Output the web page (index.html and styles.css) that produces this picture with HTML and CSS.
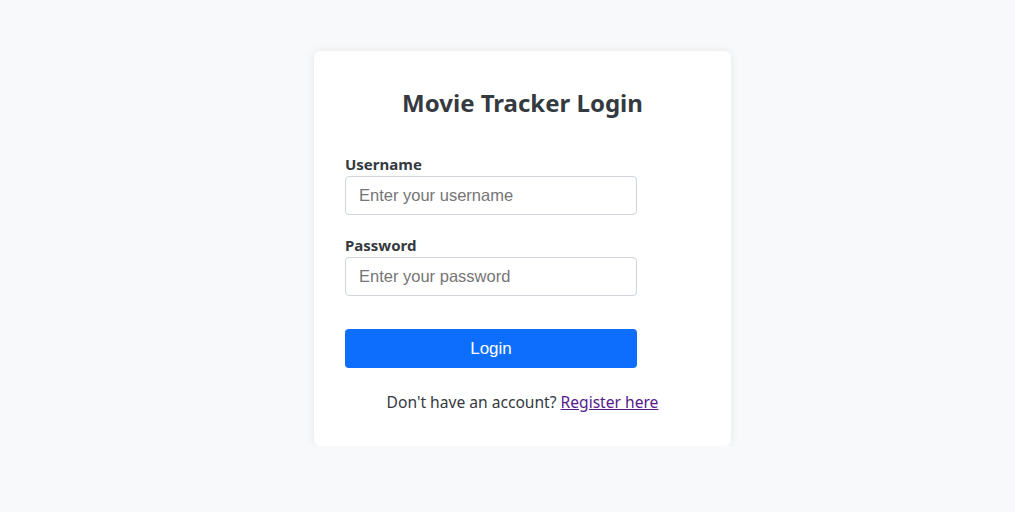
FILE: index.html
```html
<!DOCTYPE html>
<html lang="en">
<head>
<meta charset="utf-8">
<title>Movie Tracker Login</title>
<link rel="stylesheet" href="styles.css">
</head>
<body>
<div class="page">
  <div class="card">
    <h2 class="title">Movie Tracker Login</h2>
    <form class="form">
      <div class="field">
        <label class="label" for="username">Username</label>
        <input class="input" id="username" type="text" placeholder="Enter your username">
      </div>
      <div class="field">
        <label class="label" for="password">Password</label>
        <input class="input" id="password" type="password" placeholder="Enter your password">
      </div>
      <button class="btn" type="button">Login</button>
    </form>
    <p class="footer">Don't have an account? <a class="link" href="#">Register here</a></p>
  </div>
</div>
</body>
</html>
```

FILE: styles.css
```css
html, body {
  margin: 0;
  padding: 0;
}
body {
  background: #f8f9fa;
  font-family: "Noto Sans", "Open Sans", sans-serif;
  color: #333;
}
.page {
  display: flex;
  justify-content: center;
  padding: 51px 0 0 30px;
}
.card {
  width: 417px;
  box-sizing: border-box;
  background: #fff;
  border-radius: 6px;
  box-shadow: 0 0 10px rgba(0, 0, 0, 0.08);
  padding: 32px 31px 32px;
}
.title {
  margin: 5px 0 35px;
  text-align: center;
  font-size: 24px;
  line-height: 29px;
  font-weight: 700;
  color: #343a40;
}
.form {
  width: 292px;
}
.field {
  display: flex;
  flex-direction: column;
  margin-bottom: 18px;
}
.label {
  font-size: 15px;
  line-height: 24px;
  font-weight: 700;
  color: #343a40;
}
.input {
  box-sizing: border-box;
  width: 292px;
  height: 39px;
  border: 1px solid #ced4da;
  border-radius: 4px;
  padding: 0 13px;
  font-family: "Liberation Sans", Arial, sans-serif;
  font-size: 16.5px;
  color: #333;
  background: #fff;
}
.input::placeholder {
  color: #757575;
}
.btn {
  display: block;
  width: 292px;
  height: 39px;
  margin-top: 33px;
  border: none;
  border-radius: 4px;
  background: #0d6efd;
  color: #fff;
  font-family: "Liberation Sans", Arial, sans-serif;
  font-size: 17px;
}
.footer {
  margin: 22px 0 0;
  text-align: center;
  font-size: 15.6px;
  line-height: 24px;
  color: #343a40;
}
.link {
  color: #551a8b;
}
```
